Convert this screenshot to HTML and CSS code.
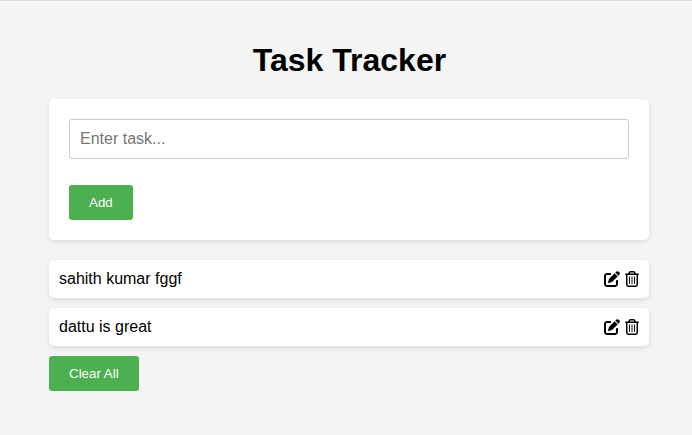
FILE: index.html
```html
<!DOCTYPE html>
<html lang="en">
<head>
<meta charset="utf-8">
<title>Task Tracker</title>
<link rel="stylesheet" href="styles.css">
</head>
<body>
<svg class="sprite" aria-hidden="true">
<symbol id="edit" viewBox="0 0 512 512"><path d="M471.6 21.7c-21.9-21.9-57.3-21.9-79.2 0L362.3 51.7l97.9 97.9 30.1-30.1c21.9-21.9 21.9-57.3 0-79.2L471.6 21.7zm-299.2 220c-6.1 6.1-10.8 13.6-13.5 21.9l-29.6 88.8c-2.9 8.6-.6 18.1 5.8 24.6s15.9 8.7 24.6 5.8l88.8-29.6c8.2-2.7 15.7-7.4 21.9-13.5L437.7 172.3 339.7 74.3 172.4 241.7zM96 64C43 64 0 107 0 160V416c0 53 43 96 96 96H352c53 0 96-43 96-96V320c0-17.7-14.3-32-32-32s-32 14.3-32 32v96c0 17.7-14.3 32-32 32H96c-17.7 0-32-14.3-32-32V160c0-17.7 14.3-32 32-32h96c17.7 0 32-14.3 32-32s-14.3-32-32-32H96z"/></symbol>
<symbol id="trash" viewBox="0 0 448 512"><path d="M170.5 51.6L151.5 80h145l-19-28.4c-1.5-2.2-4-3.6-6.7-3.6H177.1c-2.7 0-5.2 1.3-6.7 3.6zm147-26.6L354.2 80H424c13.3 0 24 10.7 24 24s-10.7 24-24 24h-8V432c0 44.2-35.8 80-80 80H112c-44.2 0-80-35.8-80-80V128H24c-13.3 0-24-10.7-24-24S10.7 80 24 80H93.8l36.7-55.1C140.9 9.4 158.4 0 177.1 0h93.7c18.7 0 36.2 9.4 46.6 24.9zM80 128V432c0 17.7 14.3 32 32 32H336c17.7 0 32-14.3 32-32V128H80z"/><path d="M144 192V400M224 192V400M304 192V400" fill="none" stroke="#000" stroke-width="32" stroke-linecap="round"/></symbol>
</svg>
<main class="container">
<h1>Task Tracker</h1>
<form class="card"><input type="text" placeholder="Enter task..."><button type="button">Add</button></form>
<ul>
<li><span>sahith kumar fggf</span><span class="actions"><svg class="edit"><use href="#edit"/></svg><svg class="trash"><use href="#trash"/></svg></span></li>
<li><span>dattu is great</span><span class="actions"><svg class="edit"><use href="#edit"/></svg><svg class="trash"><use href="#trash"/></svg></span></li>
</ul>
<button type="button">Clear All</button>
</main>
</body>
</html>
```
FILE: styles.css
```css
* { box-sizing: border-box; }
body { margin: 0; min-height: 435px; background: #f4f4f4; border-top: 1px solid #dadada; font: 16px/18px "Liberation Sans", Arial, sans-serif; color: #000; }
.sprite { display: none; }
.container { width: 600px; margin: 0 0 0 49px; padding-top: 41px; }
h1 { margin: 0 0 20px; padding-left: 1px; font-size: 32px; line-height: 37px; text-align: center; }
.card { height: 141px; padding: 20px; background: #fff; border-radius: 5px; box-shadow: 0 2px 5px rgba(0,0,0,.1); }
input { display: block; width: 100%; height: 40px; margin: 0 0 26px; padding: 10px; border: 1px solid #ccc; border-radius: 3px; font: 16px "Liberation Sans", Arial, sans-serif; }
input::placeholder { color: #757575; }
button { display: block; height: 35px; padding: 10px 20px; border: 0; border-radius: 3px; background: #4caf50; color: #fff; font: 13.333px/15px "Liberation Sans", Arial, sans-serif; }
ul { list-style: none; margin: 20px 0 10px; padding: 0; }
li { display: flex; justify-content: space-between; align-items: center; height: 38px; padding: 10px; margin-bottom: 10px; background: #fff; border-radius: 5px; box-shadow: 0 2px 5px rgba(0,0,0,.1); }
.actions { display: flex; gap: 5px; }
.edit { width: 16px; height: 16px; }
.trash { width: 14px; height: 16px; }
```
